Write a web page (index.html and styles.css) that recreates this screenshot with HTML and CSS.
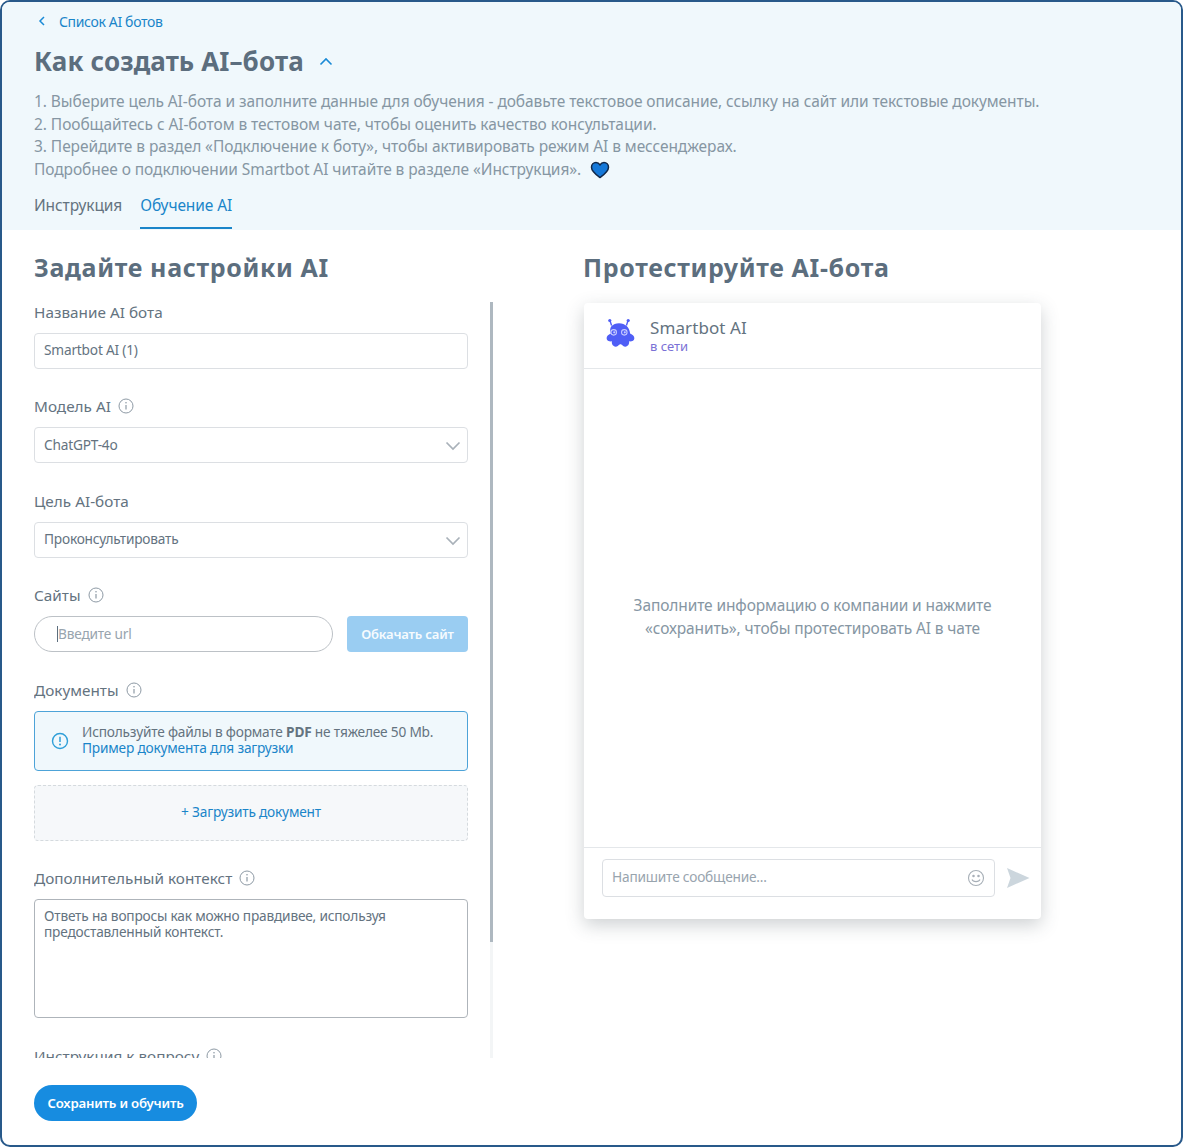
FILE: index.html
```html
<!DOCTYPE html>
<html lang="ru">
<head>
    <meta charset="UTF-8">
    <meta name="viewport" content="width=device-width, initial-scale=1.0">
    <title>Обучение AI</title>
    <link rel="stylesheet" href="styles.css">
</head>
<body>
    <div class="app">
        <!-- Header -->
        <header class="top">
            <a class="back-link" href="#">
                <svg width="8" height="10" viewBox="0 0 8 10"><path d="M6 1L2 5l4 4" fill="none" stroke="#1a8ad6" stroke-width="1.5"/></svg>
                Список AI ботов
            </a>
            <div class="top-title">
                <h1>Как создать AI–бота</h1>
                <svg width="14" height="9" viewBox="0 0 14 9"><path d="M1.5 7.5L7 2l5.5 5.5" fill="none" stroke="#1a8ad6" stroke-width="1.6"/></svg>
            </div>
            <div class="how-to">
                <p>1. Выберите цель AI-бота и заполните данные для обучения - добавьте текстовое описание, ссылку на сайт или текстовые документы.</p>
                <p>2. Пообщайтесь с AI-ботом в тестовом чате, чтобы оценить качество консультации.</p>
                <p>3. Перейдите в раздел «Подключение к боту», чтобы активировать режим AI в мессенджерах.</p>
                <p>Подробнее о подключении Smartbot AI читайте в разделе «Инструкция».
                    <svg class="heart" width="20" height="18" viewBox="0 0 20 18"><path d="M10 16.5C6 13.5 1.500 10.500 1.500 6.200 1.500 3.400 3.600 1.500 6 1.500c1.700 0 3.100.9 4 2.300.9-1.400 2.300-2.300 4-2.300 2.400 0 4.500 1.900 4.500 4.700 0 4.300-4.500 7.300-8.500 10.300z" fill="#1578d8" stroke="#12294a" stroke-width="1.500"/></svg>
                </p>
            </div>
            <nav class="tabs">
                <a class="tab" href="#">Инструкция</a>
                <a class="tab tab-active" href="#">Обучение AI</a>
            </nav>
        </header>

        <main class="columns">
            <!-- Settings -->
            <section class="settings">
                <h2>Задайте настройки AI</h2>
                <div class="settings-body">
                    <div class="settings-scroll">
                        <div class="field">
                            <label>Название AI бота</label>
                            <input class="control" type="text" value="Smartbot AI (1)">
                        </div>
                        <div class="field">
                            <label>Модель AI <svg class="info"><use href="#i-info"/></svg></label>
                            <div class="select-wrap">
                                <select class="control"><option>ChatGPT-4o</option></select>
                                <svg class="chevron" width="16" height="10" viewBox="0 0 16 10"><path d="M1.500 1.500L8 8l6.500-6.500" fill="none" stroke="#a9b1b9" stroke-width="1.700"/></svg>
                            </div>
                        </div>
                        <div class="field">
                            <label>Цель AI-бота</label>
                            <div class="select-wrap">
                                <select class="control"><option>Проконсультировать</option></select>
                                <svg class="chevron" width="16" height="10" viewBox="0 0 16 10"><path d="M1.500 1.500L8 8l6.500-6.500" fill="none" stroke="#a9b1b9" stroke-width="1.700"/></svg>
                            </div>
                        </div>
                        <div class="field">
                            <label>Сайты <svg class="info"><use href="#i-info"/></svg></label>
                            <div class="site-row">
                                <div class="url-wrap">
                                    <input class="control url-input" type="text" placeholder="Введите url">
                                    <span class="caret"></span>
                                </div>
                                <button class="crawl-btn" type="button">Обкачать сайт</button>
                            </div>
                        </div>
                        <div class="field">
                            <label>Документы <svg class="info"><use href="#i-info"/></svg></label>
                            <div class="notice">
                                <svg width="18" height="18" viewBox="0 0 18 18"><circle cx="9" cy="9" r="7.500" fill="none" stroke="#2f9fd8" stroke-width="1.400"/><path d="M9 4.800v5.200" stroke="#2f9fd8" stroke-width="1.500"/><circle cx="9" cy="12.600" r="1" fill="#2f9fd8"/></svg>
                                <div class="notice-text">
                                    <div>Используйте файлы в формате <b>PDF</b> не тяжелее 50 Mb.</div>
                                    <a href="#">Пример документа для загрузки</a>
                                </div>
                            </div>
                            <a class="upload" href="#">+ Загрузить документ</a>
                        </div>
                        <div class="field">
                            <label>Дополнительный контекст <svg class="info"><use href="#i-info"/></svg></label>
                            <textarea class="control context">Ответь на вопросы как можно правдивее, используя предоставленный контекст.</textarea>
                        </div>
                        <div class="field">
                            <label>Инструкция к вопросу <svg class="info"><use href="#i-info"/></svg></label>
                            <textarea class="control question"></textarea>
                        </div>
                    </div>
                    <div class="scrollbar"><div class="scrollbar-thumb"></div></div>
                </div>
            </section>

            <!-- Test chat -->
            <section class="test">
                <h2>Протестируйте AI-бота</h2>
                <div class="chat">
                    <div class="chat-head">
                        <svg width="36" height="36" viewBox="0 0 34 34">
                            <path d="M10 8L8.500 3.500M24 8l1.500-4.500" stroke="#4f5ef6" stroke-width="1.300"/>
                            <circle cx="8.300" cy="3.300" r="1.500" fill="#4f5ef6"/>
                            <circle cx="25.700" cy="3.300" r="1.500" fill="#4f5ef6"/>
                            <path d="M17 6c6 0 10 4 10.500 9.500 2.500 1 4 2.500 4 4.500 0 2.300-2.500 3.300-5 3 .5 2.500-1 5-3.500 5-1.800 0-2.500-1.200-3.500-1.800-.8-.5-1.400-.5-2.200 0-1 .6-1.700 1.800-3.500 1.800-2.500 0-4-2.500-3.500-5-2.500.3-5-.7-5-3 0-2 1.500-3.500 4-4.500C7 10 11 6 17 6z" fill="#4f5ef6"/>
                            <circle cx="12" cy="14.500" r="2.600" fill="none" stroke="#c9ccff" stroke-width="1"/>
                            <circle cx="22" cy="14.500" r="2.600" fill="none" stroke="#c9ccff" stroke-width="1"/>
                            <circle cx="12.500" cy="14.500" r="1" fill="#c9ccff"/>
                            <circle cx="22.500" cy="14.500" r="1" fill="#c9ccff"/>
                        </svg>
                        <div>
                            <div class="chat-name">Smartbot AI</div>
                            <div class="chat-status">в сети</div>
                        </div>
                    </div>
                    <div class="chat-body">
                        <p>Заполните информацию о компании и нажмите<br>«сохранить», чтобы протестировать AI в чате</p>
                    </div>
                    <div class="chat-foot">
                        <div class="msg-box">
                            <input type="text" placeholder="Напишите сообщение...">
                            <svg width="18" height="18" viewBox="0 0 18 18" fill="none" stroke="#a7afb7" stroke-width="1.100"><circle cx="9" cy="9" r="7.500"/><circle cx="6.500" cy="7" r=".7" fill="#a7afb7"/><circle cx="11.500" cy="7" r=".7" fill="#a7afb7"/><path d="M5 10.500c1 2.800 7 2.800 8 0"/></svg>
                        </div>
                        <svg class="send" width="24" height="22" viewBox="0 0 24 22"><path d="M1 1l22.500 10L1 21l3.500-10z" fill="#ccd6dd"/></svg>
                    </div>
                </div>
            </section>
        </main>

        <footer class="bottom">
            <button class="save-btn" type="button">Сохранить и обучить</button>
        </footer>
    </div>

    <svg width="0" height="0" class="sprite">
        <symbol id="i-info" viewBox="0 0 16 16">
            <circle cx="8" cy="8" r="7" fill="none" stroke="#8e9aa5" stroke-width="1"/>
            <path d="M8 7v4.500" stroke="#8e9aa5" stroke-width="1.200"/>
            <circle cx="8" cy="4.800" r=".8" fill="#8e9aa5"/>
        </symbol>
    </svg>
</body>
</html>
```
FILE: styles.css
```css
/* General Styles */
* {
    box-sizing: border-box;
}

body {
    font-family: "Noto Sans", sans-serif;
    margin: 0;
    padding: 0;
    background-color: #fff;
    color: #5c6e7e;
}

a {
    text-decoration: none;
}

.sprite {
    display: block;
}

.app {
    height: 1147px;
    border: 2px solid #28598a;
    border-radius: 10px;
    overflow: hidden;
    display: flex;
    flex-direction: column;
}

/* Header */
.top {
    height: 228px;
    flex: none;
    background-color: #f0f8fc;
    padding: 11px 32px 0;
}

.back-link {
    display: flex;
    align-items: center;
    gap: 13px;
    height: 16px;
    padding-left: 4px;
    font-size: 14px;
    letter-spacing: -0.35px;
    color: #1a85c9;
}

.top-title {
    display: flex;
    align-items: center;
    gap: 15px;
    margin-top: 13px;
    height: 38px;
}

.top-title h1 {
    margin: 0;
    font-size: 26px;
    font-weight: 700;
    letter-spacing: 0.1px;
    color: #5c6e7e;
}

.how-to {
    margin-top: 10px;
    font-size: 15.5px;
    line-height: 22.7px;
    letter-spacing: -0.07px;
    color: #8696a3;
}

.how-to p {
    margin: 0;
    white-space: nowrap;
}

.heart {
    vertical-align: -4px;
    margin-left: 5px;
}

.tabs {
    display: flex;
    gap: 18px;
    margin-top: 12px;
}

.tab {
    height: 36px;
    font-size: 15.5px;
    line-height: 24px;
    letter-spacing: -0.1px;
    color: #64737f;
}

.tab-active {
    color: #1a85c9;
    border-bottom: 2px solid #1a85c9;
}

/* Columns */
.columns {
    flex: 1;
    min-height: 0;
    display: flex;
    padding: 0 32px;
}

.columns h2 {
    margin: 0;
    height: 72px;
    padding-top: 19px;
    font-size: 25px;
    line-height: 36px;
    font-weight: 700;
    letter-spacing: 0.65px;
    color: #5c6e7e;
}

.settings {
    width: 459px;
    flex: none;
    display: flex;
    flex-direction: column;
    min-height: 0;
}

.settings-body {
    position: relative;
    flex: 1;
    min-height: 0;
}

.settings-scroll {
    height: 100%;
    overflow: hidden;
    padding: 0.9px 25px 0 0;
}

.scrollbar {
    position: absolute;
    top: 0;
    right: 0;
    bottom: 0;
    width: 3px;
    background-color: #f3f5f6;
}

.scrollbar-thumb {
    height: 640px;
    background-color: #aeb8c0;
}

.field {
    margin-bottom: 28.5px;
}

.field label {
    display: flex;
    align-items: center;
    gap: 7px;
    height: 20px;
    padding-bottom: 2px;
    margin-bottom: 10px;
    font-size: 15.3px;
    letter-spacing: 0.02px;
    color: #64737f;
}

.info {
    width: 16px;
    height: 16px;
}

.control {
    display: block;
    width: 100%;
    height: 36px;
    padding: 0 9px 2px;
    background-color: #fff;
    border: 1px solid #dcdfe3;
    border-radius: 4px;
    font-family: inherit;
    font-size: 13.7px;
    letter-spacing: -0.2px;
    color: #64737f;
    outline: none;
}

select.control {
    appearance: none;
}

.select-wrap {
    position: relative;
}

.chevron {
    position: absolute;
    top: 14px;
    right: 7px;
}

.site-row {
    display: flex;
    gap: 14px;
}

.url-wrap {
    position: relative;
    flex: 1;
}

.url-input {
    height: 36px;
    padding-left: 23px;
    border-color: #bcc1c6;
    border-radius: 18px;
}

.url-input::placeholder {
    color: #98a4ae;
}

.caret {
    position: absolute;
    left: 23px;
    top: 10px;
    width: 1px;
    height: 16px;
    background-color: #5c6e7e;
}

.crawl-btn {
    width: 121px;
    height: 36px;
    padding-bottom: 2px;
    border: none;
    border-radius: 4px;
    background-color: #9acdf2;
    color: #f6fbfe;
    font-family: inherit;
    font-size: 13px;
    font-weight: 600;
    letter-spacing: -0.15px;
}

.notice {
    display: flex;
    align-items: center;
    gap: 13px;
    height: 60px;
    padding: 0 16px;
    background-color: #f0f8fc;
    border: 1px solid #4da3d8;
    border-radius: 4px;
    font-size: 13.7px;
    line-height: 16px;
    letter-spacing: -0.2px;
    color: #64737f;
}

.notice-text {
    margin-top: -2px;
}

.notice a {
    color: #1a85c9;
}

.upload {
    display: flex;
    align-items: center;
    justify-content: center;
    height: 56px;
    margin-top: 14px;
    padding-bottom: 2px;
    background-color: #f6f8fa;
    border: 1px dashed #d5dade;
    border-radius: 4px;
    font-size: 13.7px;
    letter-spacing: -0.2px;
    color: #1a85c9;
}

.context {
    height: 119px;
    padding: 8px 9px;
    line-height: 16px;
    border-color: #aeb4ba;
    resize: none;
}

.question {
    height: 119px;
    resize: none;
}

/* Test chat */
.test {
    margin-left: 90px;
    width: 458px;
}

.chat {
    height: 616px;
    margin: 1px 0 0 1px;
    display: flex;
    flex-direction: column;
    border-radius: 4px;
    background-color: #fff;
    box-shadow: 0 6px 18px rgba(60, 70, 80, 0.25);
}

.chat-head {
    display: flex;
    align-items: center;
    gap: 13px;
    height: 66px;
    padding: 0 18px 0 18px;
    border-bottom: 1px solid #e4e7ea;
}

.chat-head svg {
    margin: -2px 0 0 -1px;
}

.chat-name {
    font-size: 17px;
    line-height: 22px;
    letter-spacing: 0.1px;
    color: #64737f;
}

.chat-status {
    font-size: 13px;
    line-height: 15px;
    color: #7b71d6;
}

.chat-body {
    flex: 1;
    display: flex;
    align-items: center;
    justify-content: center;
    padding-top: 17px;
    text-align: center;
    border-bottom: 1px solid #e4e7ea;
}

.chat-body p {
    margin: 0;
    font-size: 15.5px;
    line-height: 23px;
    letter-spacing: -0.12px;
    color: #8696a3;
}

.chat-foot {
    display: flex;
    gap: 11px;
    height: 71px;
    padding: 11px 11px 0 18px;
}

.msg-box {
    flex: 1;
    height: 38px;
    display: flex;
    align-items: center;
    padding: 0 9px;
    border: 1px solid #dcdfe3;
    border-radius: 4px;
}

.msg-box input {
    flex: 1;
    border: none;
    outline: none;
    padding: 0;
    margin-top: -3px;
    font-family: inherit;
    font-size: 13.7px;
    letter-spacing: -0.2px;
}

.msg-box input::placeholder {
    color: #98a4ae;
}

.send {
    margin-top: 8px;
}

/* Footer */
.bottom {
    flex: none;
    height: 87px;
    padding: 27px 32px 0;
}

.save-btn {
    width: 163px;
    height: 36px;
    border: none;
    border-radius: 18px;
    background-color: #178ce0;
    color: #fff;
    font-family: inherit;
    font-size: 13.2px;
    font-weight: 600;
    letter-spacing: -0.2px;
}
```
